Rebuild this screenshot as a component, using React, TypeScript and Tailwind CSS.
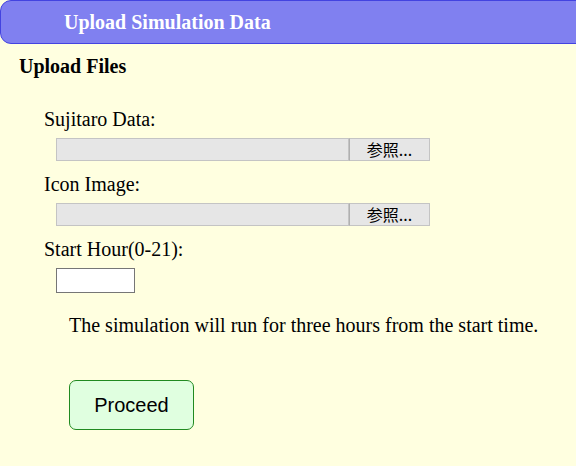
export default function App() {
  const serif = { fontFamily: '"Liberation Serif", "Times New Roman", serif' };
  return (
    <div
      className="min-h-[466px] w-[576px] bg-[#ffffe0] text-black overflow-hidden"
      style={serif}
    >
      {/* Header bar */}
      <div className="h-[44px] w-[600px] rounded-l-[11px] border border-[#4343e0] bg-[#8080f0] pl-[63px] flex items-center">
        <span className="text-[20px] font-bold text-white leading-[22px]">
          Upload Simulation Data
        </span>
      </div>

      <div className="pl-[19px] mt-[11px] text-[20px] font-bold leading-[22px]">
        Upload Files
      </div>

      <div className="pl-[44px] mt-[31px]">
        <div className="text-[20px] leading-[22px]">Sujitaro Data:</div>
        <FileField />
        <div className="text-[20px] leading-[22px] mt-[12px]">Icon Image:</div>
        <FileField />
        <div className="text-[20px] leading-[22px] mt-[12px]">
          Start Hour(0-21):
        </div>
        <input
          type="text"
          className="mt-[8px] ml-[12px] block h-[25px] w-[79px] border border-[#767676] bg-white outline-none"
        />
      </div>

      <p className="pl-[69px] mt-[21px] text-[20px] leading-[22px]">
        The simulation will run for three hours from the start time.
      </p>

      <div className="pl-[69px] mt-[44px]">
        <button
          type="button"
          className="h-[50px] w-[125px] rounded-[7px] border border-[#208a20] bg-[#e0ffe0] text-[20px] text-black"
          style={{ fontFamily: '"Liberation Sans", Arial, sans-serif' }}
        >
          Proceed
        </button>
      </div>
    </div>
  );
}

function FileField() {
  return (
    <div className="mt-[8px] ml-[12px] flex h-[23px] w-[374px]">
      <div className="flex-1 border border-[#c4c4c4] bg-[#e6e6e6]" />
      <button
        type="button"
        className="w-[81px] border border-[#c4c4c4] border-l-[#b0b0b0] bg-[#e6e6e6] text-[16px] leading-[21px] text-black"
        style={{ fontFamily: '"Noto Sans CJK JP", "Liberation Sans", sans-serif' }}
      >
        参照...
      </button>
    </div>
  );
}
